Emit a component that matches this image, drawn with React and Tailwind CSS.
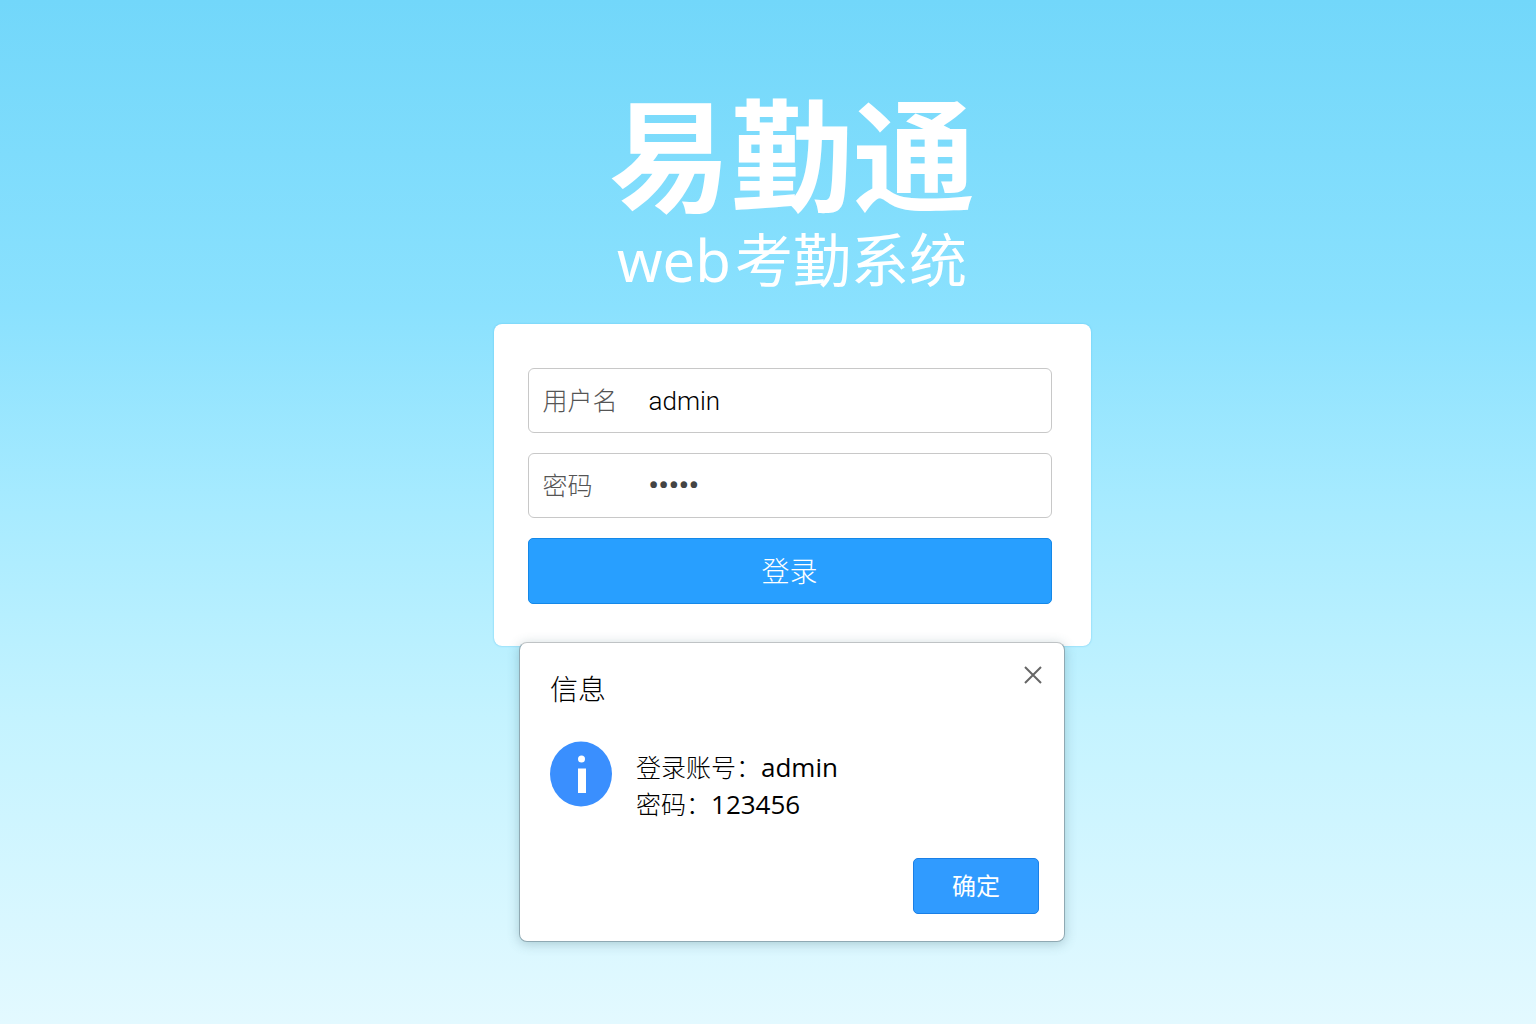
import { useState } from 'react'

// ─── Page heading ────────────────────────────────────────────────
function Brand() {
  return (
    <header className="text-center text-white">
      <h1 className="text-[122px] leading-[130px] font-bold">易勤通</h1>
      <p className="mt-2 text-[58px] leading-[64px]">
        <span className="mr-1">web</span>考勤系统
      </p>
    </header>
  )
}

// ─── Labelled text box ───────────────────────────────────────────
function Field({ id, label, ...props }) {
  return (
    <div className="flex h-[65px] items-center rounded-md border border-[#c8c8c8] pl-[14px]">
      <label htmlFor={id} className="w-[106px] shrink-0 text-[25px] font-light text-[#555]">
        {label}
      </label>
      <input
        id={id}
        className="h-full min-w-0 flex-1 bg-transparent font-['Roboto','Noto_Sans_CJK_SC',sans-serif] text-[26px] font-light text-black outline-none [&[type=password]]:text-[28px] [&[type=password]]:font-bold [&[type=password]]:text-[#444]"
        {...props}
      />
    </div>
  )
}

// ─── Login form ──────────────────────────────────────────────────
function LoginCard({ onSubmit }) {
  const [username, setUsername] = useState('admin')
  const [password, setPassword] = useState('12345')

  function handleSubmit(e) {
    e.preventDefault()
    onSubmit()
  }

  return (
    <form
      onSubmit={handleSubmit}
      className="mt-8 flex w-full max-w-[597px] flex-col rounded-lg bg-white pt-11 pr-[39px] pb-[42px] pl-[34px] shadow-[0_0_2px_#5fc4f0]"
    >
      <div className="flex flex-col gap-5">
        <Field
          id="username"
          label="用户名"
          value={username}
          onChange={e => setUsername(e.target.value)}
        />
        <Field
          id="password"
          label="密码"
          type="password"
          value={password}
          onChange={e => setPassword(e.target.value)}
        />
        <button
          type="submit"
          className="h-[66px] rounded-[5px] border border-[#1488e8] bg-[#289fff] text-[28px] font-light text-white"
        >
          登录
        </button>
      </div>
    </form>
  )
}

// ─── Message box ─────────────────────────────────────────────────
function InfoDialog({ onClose }) {
  return (
    <section
      role="dialog"
      aria-labelledby="info-title"
      className="relative -mt-1 w-full max-w-[546px] rounded-lg border border-[#8fa9b3] border-t-[#bfc3c5] bg-white pt-[18px] pr-[25px] pb-[27px] pl-[30px] shadow-[0_2px_12px_rgba(60,100,110,0.3)]"
    >
      <div className="flex items-start justify-between">
        <h2 id="info-title" className="pt-2 text-[28px] leading-10 font-light text-black">信息</h2>
        <button type="button" aria-label="关闭" onClick={onClose} className="-mr-2 p-1 text-[#666]">
          <svg className="size-5" viewBox="0 0 20 20" fill="none" stroke="currentColor" strokeWidth="2">
            <path d="M2 2L18 18M18 2L2 18" />
          </svg>
        </button>
      </div>

      <div className="mt-8 flex items-start gap-6">
        <svg className="h-[66px] w-[62px] shrink-0" viewBox="0 0 62 66" aria-hidden="true">
          <ellipse cx="31" cy="33" rx="31" ry="32.5" fill="#3a8ffe" />
          <circle cx="31.5" cy="18" r="3.5" fill="#fff" />
          <rect x="28" y="27.5" width="8" height="24.5" fill="#fff" />
        </svg>
        <p className="pt-2 text-[25px] leading-[37px] font-light text-black">
          登录账号：<span className="font-['Open_Sans',sans-serif] text-[26px] font-normal">admin</span>
          <br />
          密码：<span className="font-['Open_Sans',sans-serif] text-[26px] font-normal">123456</span>
        </p>
      </div>

      <div className="mt-[35px] flex justify-end">
        <button
          type="button"
          onClick={onClose}
          className="h-14 w-[126px] rounded-[5px] border border-[#1a7fe6] bg-[#309bff] text-[24px] text-white"
        >
          确定
        </button>
      </div>
    </section>
  )
}

// ─── App Root ────────────────────────────────────────────────────
export default function App() {
  const [dialogOpen, setDialogOpen] = useState(true)

  return (
    <main className="flex min-h-dvh flex-col items-center bg-[linear-gradient(180deg,#72d7fa_0%,#8ae1fe_30%,#a8ebff_50%,#c4f3ff_70%,#e3f9ff_100%)] pt-[90px] pb-20 pl-12 font-['Noto_Sans','Noto_Sans_CJK_SC',sans-serif]">
      <Brand />
      <LoginCard onSubmit={() => setDialogOpen(true)} />
      {dialogOpen && <InfoDialog onClose={() => setDialogOpen(false)} />}
    </main>
  )
}
